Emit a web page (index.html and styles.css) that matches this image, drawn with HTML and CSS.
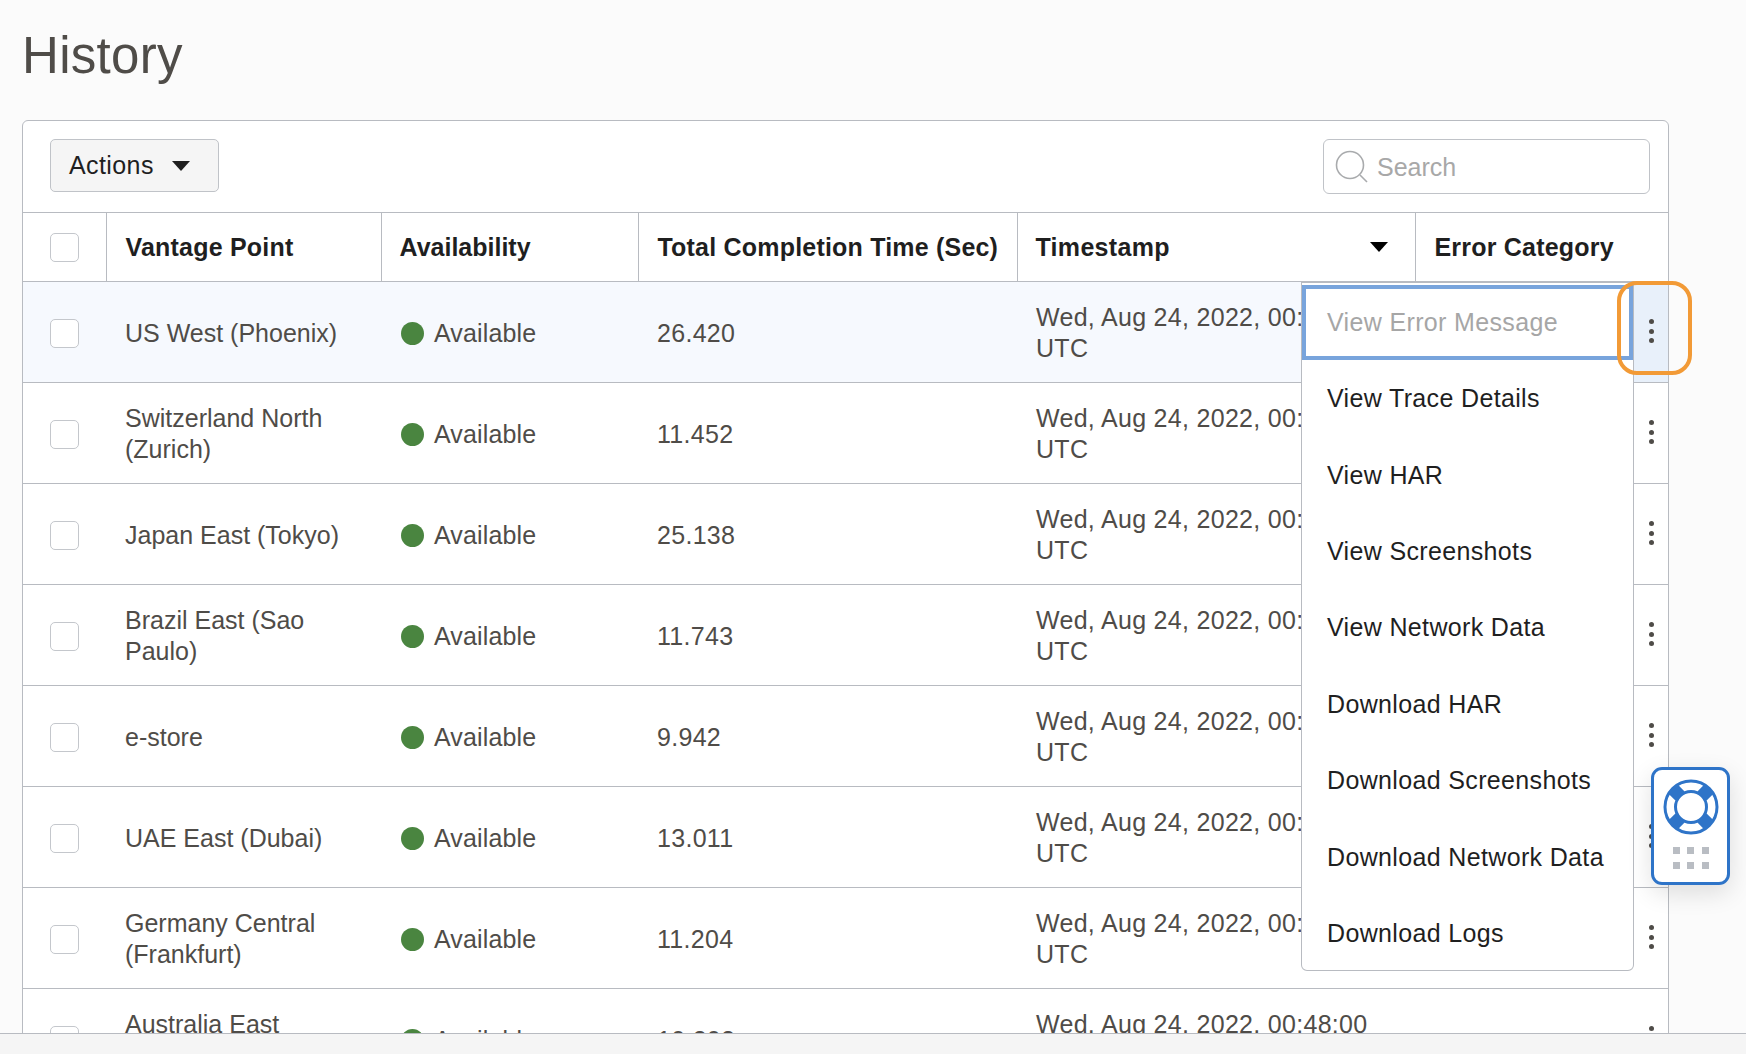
FILE: index.html
```html
<!DOCTYPE html>
<html lang="en">
  <head>
    <meta charset="UTF-8" />
    <title>History</title>
    <link rel="stylesheet" href="styles.css">
  </head>
  <body>
    <main class="page">
      <h1>History</h1>

      <div class="panel">
        <div class="toolbar">
          <button class="actions-btn">Actions <span class="caret"></span></button>
          <div class="search">
            <svg class="search-icon" width="34" height="34" viewBox="0 0 34 34">
              <circle cx="15" cy="15" r="13.5" fill="none" stroke="#a9abad" stroke-width="1.6" />
              <path d="M25 25l7 7" fill="none" stroke="#a9abad" stroke-width="1.6" />
            </svg>
            <span>Search</span>
          </div>
        </div>

        <table class="history">
          <colgroup>
            <col class="col-check" />
            <col class="col-point" />
            <col class="col-avail" />
            <col class="col-time" />
            <col class="col-stamp" />
            <col />
          </colgroup>
          <thead>
            <tr>
              <th><span class="check"></span></th>
              <th>Vantage Point</th>
              <th>Availability</th>
              <th>Total Completion Time (Sec)</th>
              <th><div class="sort-head">Timestamp <span class="caret sort-caret"></span></div></th>
              <th>Error Category</th>
            </tr>
          </thead>
          <tbody>
            <tr class="current">
              <td><span class="check"></span></td>
              <td>US West (Phoenix)</td>
              <td><div class="status"><span class="dot"></span>Available</div></td>
              <td>26.420</td>
              <td>Wed, Aug 24, 2022, 00:48:00 UTC</td>
              <td class="more-cell"><div class="more"><i></i><i></i><i></i></div></td>
            </tr>
            <tr>
              <td><span class="check"></span></td>
              <td>Switzerland North (Zurich)</td>
              <td><div class="status"><span class="dot"></span>Available</div></td>
              <td>11.452</td>
              <td>Wed, Aug 24, 2022, 00:48:00 UTC</td>
              <td class="more-cell"><div class="more"><i></i><i></i><i></i></div></td>
            </tr>
            <tr>
              <td><span class="check"></span></td>
              <td>Japan East (Tokyo)</td>
              <td><div class="status"><span class="dot"></span>Available</div></td>
              <td>25.138</td>
              <td>Wed, Aug 24, 2022, 00:48:00 UTC</td>
              <td class="more-cell"><div class="more"><i></i><i></i><i></i></div></td>
            </tr>
            <tr>
              <td><span class="check"></span></td>
              <td>Brazil East (Sao Paulo)</td>
              <td><div class="status"><span class="dot"></span>Available</div></td>
              <td>11.743</td>
              <td>Wed, Aug 24, 2022, 00:48:00 UTC</td>
              <td class="more-cell"><div class="more"><i></i><i></i><i></i></div></td>
            </tr>
            <tr>
              <td><span class="check"></span></td>
              <td>e-store</td>
              <td><div class="status"><span class="dot"></span>Available</div></td>
              <td>9.942</td>
              <td>Wed, Aug 24, 2022, 00:48:00 UTC</td>
              <td class="more-cell"><div class="more"><i></i><i></i><i></i></div></td>
            </tr>
            <tr>
              <td><span class="check"></span></td>
              <td>UAE East (Dubai)</td>
              <td><div class="status"><span class="dot"></span>Available</div></td>
              <td>13.011</td>
              <td>Wed, Aug 24, 2022, 00:48:00 UTC</td>
              <td class="more-cell"><div class="more"><i></i><i></i><i></i></div></td>
            </tr>
            <tr>
              <td><span class="check"></span></td>
              <td>Germany Central (Frankfurt)</td>
              <td><div class="status"><span class="dot"></span>Available</div></td>
              <td>11.204</td>
              <td>Wed, Aug 24, 2022, 00:48:00 UTC</td>
              <td class="more-cell"><div class="more"><i></i><i></i><i></i></div></td>
            </tr>
            <tr>
              <td><span class="check"></span></td>
              <td>Australia East (Sydney)</td>
              <td><div class="status"><span class="dot"></span>Available</div></td>
              <td>10.202</td>
              <td>Wed, Aug 24, 2022, 00:48:00 UTC</td>
              <td class="more-cell"><div class="more"><i></i><i></i><i></i></div></td>
            </tr>
          </tbody>
        </table>
      </div>

      <ul class="row-menu">
        <li class="disabled">View Error Message</li>
        <li>View Trace Details</li>
        <li>View HAR</li>
        <li>View Screenshots</li>
        <li>View Network Data</li>
        <li>Download HAR</li>
        <li>Download Screenshots</li>
        <li>Download Network Data</li>
        <li>Download Logs</li>
      </ul>

      <div class="callout"></div>

      <div class="help">
        <svg width="56" height="56" viewBox="0 0 56 56">
          <circle cx="28" cy="28" r="26" fill="none" stroke="#2e74c8" stroke-width="3" />
          <circle cx="28" cy="28" r="15.5" fill="none" stroke="#2e74c8" stroke-width="3" />
          <path d="M17 17L9.600 9.600M39 17l7.400-7.400M17 39l-7.400 7.400M39 39l7.400 7.400" fill="none" stroke="#2e74c8" stroke-width="13" />
        </svg>
        <div class="help-grid">
          <i></i><i></i><i></i><i></i><i></i><i></i>
        </div>
      </div>
    </main>
    <footer class="bottom-bar"></footer>
  </body>
</html>
```

FILE: styles.css
```css
* {
  box-sizing: border-box;
}

html,
body {
  height: 100%;
}

body {
  margin: 0;
  display: flex;
  flex-direction: column;
  overflow: hidden;
  background-color: #fbfbfb;
  color: #4f4c48;
  font-family: "Liberation Sans", Arial, sans-serif;
  font-size: 25px;
}

.page {
  position: relative;
  flex: 1;
  min-height: 0;
  overflow: hidden;
  padding: 0 77px 0 22px;
}

h1 {
  margin: 0;
  height: 120px;
  padding-top: 26px;
  font-size: 51px;
  line-height: 60px;
  font-weight: normal;
  letter-spacing: 0.3px;
  color: #4f4c48;
}

.panel {
  background-color: white;
  border: 1px solid #b8bbc1;
  border-radius: 6px;
}

.toolbar {
  display: flex;
  justify-content: space-between;
  align-items: flex-start;
  height: 91px;
  padding: 18px 18px 0 27px;
}

.actions-btn {
  display: flex;
  align-items: center;
  gap: 18px;
  width: 169px;
  height: 53px;
  padding: 0 18px;
  background-color: #f5f5f5;
  border: 1px solid #c0c3c8;
  border-radius: 5px;
  color: #1f1f1f;
  font-family: inherit;
  font-size: 25px;
  letter-spacing: 0.4px;
}

.caret {
  width: 0;
  height: 0;
  border-left: 9px solid transparent;
  border-right: 9px solid transparent;
  border-top: 10px solid #1f1f1f;
}

.search {
  display: flex;
  align-items: center;
  gap: 8px;
  width: 327px;
  height: 55px;
  padding-left: 11px;
  border: 1px solid #c0c3c8;
  border-radius: 6px;
  color: #a8a8a8;
}

.search span {
  padding-top: 2px;
}

.history {
  width: 100%;
  border-collapse: collapse;
  table-layout: fixed;
}

.col-check {
  width: 83px;
}

.col-point {
  width: 275px;
}

.col-avail {
  width: 257px;
}

.col-time {
  width: 379px;
}

.col-stamp {
  width: 398px;
}

th {
  height: 69px;
  padding: 0 18px 0 19px;
  border-top: 1px solid #b8bbc1;
  border-left: 1px solid #b8bbc1;
  text-align: left;
  color: #1f1f1f;
  white-space: nowrap;
  letter-spacing: 0.2px;
}

th:first-child {
  border-left: none;
}

th:nth-child(3) {
  padding-left: 18px;
  letter-spacing: 0;
}

th:nth-child(5) {
  padding-left: 18px;
  letter-spacing: 0.3px;
}

td {
  height: 101px;
  padding: 2px 18px 0 19px;
  border-top: 1px solid #b8bbc1;
  line-height: 31px;
  letter-spacing: 0.15px;
}

th:first-child,
td:first-child {
  padding-left: 27px;
  padding-right: 0;
}

td:nth-child(2) {
  letter-spacing: 0;
}

td:nth-child(4),
td:nth-child(5) {
  letter-spacing: 0.3px;
}

.check {
  display: block;
  width: 29px;
  height: 29px;
  background-color: white;
  border: 1px solid #c4c7cc;
  border-radius: 5px;
}

.current td {
  background-color: #f6f9fe;
}

.sort-head {
  display: flex;
  justify-content: space-between;
  align-items: center;
}

.sort-caret {
  margin-right: 9px;
  border-top-color: black;
}

.status {
  display: flex;
  align-items: center;
  gap: 10px;
  margin-left: 1px;
}

.dot {
  width: 23px;
  height: 23px;
  border-radius: 50%;
  background-color: #4a8540;
}

td.more-cell {
  padding: 0;
}

.more {
  display: flex;
  flex-direction: column;
  justify-content: center;
  align-items: center;
  gap: 4.500px;
  width: 34px;
  height: 100px;
  padding-bottom: 2px;
  margin-left: auto;
}

.more i {
  width: 5px;
  height: 5px;
  border-radius: 50%;
  background-color: #4f4c48;
}

.current .more-cell {
  background-color: white;
}

.current .more {
  background-color: #e8f0fa;
}

/* popup menu over the row */
.row-menu {
  position: absolute;
  top: 281px;
  left: 1301px;
  width: 333px;
  height: 690px;
  margin: 0;
  padding: 1px 0 0;
  list-style: none;
  background-color: white;
  border: 1px solid #b8bbc1;
  border-radius: 0 0 6px 6px;
  border-top-width: 2px;
  color: #1f1f1f;
  letter-spacing: 0.35px;
}

.row-menu li {
  display: flex;
  align-items: center;
  height: 76.400px;
  padding-left: 25px;
}

.row-menu li.disabled {
  height: 75px;
  margin-top: 1px;
  margin-bottom: 0.500px;
  color: #a6a6a6;
  outline: 4px solid #78a4dc;
  outline-offset: -4px;
}

/* orange annotation round the menu button */
.callout {
  position: absolute;
  top: 281px;
  left: 1617px;
  width: 75px;
  height: 94px;
  border: 4px solid #f29a36;
  border-radius: 20px;
}

.help {
  position: absolute;
  top: 767px;
  left: 1651px;
  display: flex;
  flex-direction: column;
  align-items: center;
  width: 79px;
  height: 118px;
  padding-top: 9px;
  background-color: white;
  border: 3px solid #2e74c8;
  border-radius: 11px;
  box-shadow: 0 8px 24px rgba(0, 0, 0, 0.12);
}

.help-grid {
  display: grid;
  grid-template-columns: repeat(3, 7px);
  gap: 8px 7.500px;
  margin-top: 12px;
}

.help-grid i {
  height: 7px;
  background-color: #b9bdc3;
}

.bottom-bar {
  height: 21px;
  flex: none;
  background-color: #f5f5f5;
  border-top: 1px solid #b8bbc1;
}
```
